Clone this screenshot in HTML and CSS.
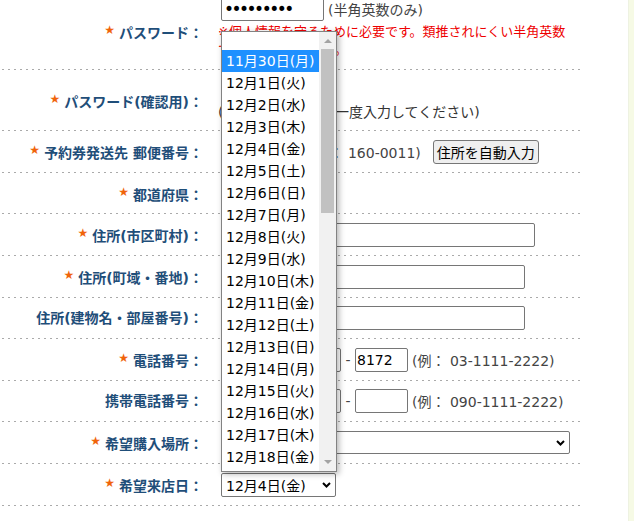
FILE: index.html
```html
<!DOCTYPE html>
<html lang="ja">
<head>
<meta charset="utf-8">
<title>予約フォーム</title>
<link rel="stylesheet" href="styles.css">
</head>
<body>
<div class="page">
  <div class="main">
    <div class="form">
      <div class="row">
        <div class="label"><span class="req">★</span>パスワード：</div>
        <div class="value v-pw">
          <div class="line"><input class="ctl lead pw" type="password" value="abcdefghi"><span class="hint">(半角英数のみ)</span></div>
          <div class="note">※個人情報を守るために必要です。類推されにくい半角英数<br>で入力してください。</div>
        </div>
      </div>
      <div class="row">
        <div class="label"><span class="req">★</span>パスワード(確認用)：</div>
        <div class="value v-confirm">
          <div class="line"><input class="ctl lead pw" type="password" value=""></div>
          <div class="text">(確認のため、もう一度入力してください)</div>
        </div>
      </div>
      <div class="row std">
        <div class="label"><span class="req">★</span>予約券発送先 郵便番号：</div>
        <div class="value">
          <div class="line"><input class="ctl lead zip" type="text" value=""><span class="hint">(例： 160-0011)</span><button class="btn" type="button">住所を自動入力</button></div>
        </div>
      </div>
      <div class="row std tight">
        <div class="label"><span class="req">★</span>都道府県：</div>
        <div class="value">
          <div class="line"><div class="ctl lead select pref"><span></span><svg class="chev" width="9" height="6" viewBox="0 0 9 6"><path d="M1 1 L4.5 4.5 L8 1" fill="none" stroke="#000" stroke-width="2"/></svg></div></div>
        </div>
      </div>
      <div class="row std">
        <div class="label"><span class="req">★</span>住所(市区町村)：</div>
        <div class="value"><div class="line"><input class="ctl lead addr1" type="text"></div></div>
      </div>
      <div class="row std">
        <div class="label"><span class="req">★</span>住所(町域・番地)：</div>
        <div class="value"><div class="line"><input class="ctl lead addr2" type="text"></div></div>
      </div>
      <div class="row std tight">
        <div class="label">住所(建物名・部屋番号)：</div>
        <div class="value"><div class="line"><input class="ctl lead addr2" type="text"></div></div>
      </div>
      <div class="row std">
        <div class="label"><span class="req">★</span>電話番号：</div>
        <div class="value"><div class="line"><input class="ctl lead tel" type="text"><span class="dash">-</span><input class="ctl tel" type="text"><span class="dash">-</span><input class="ctl tel" type="text" value="8172"><span class="hint">(例： 03-1111-2222)</span></div></div>
      </div>
      <div class="row std tight">
        <div class="label">携帯電話番号：</div>
        <div class="value"><div class="line"><input class="ctl lead tel" type="text"><span class="dash">-</span><input class="ctl tel" type="text"><span class="dash">-</span><input class="ctl tel" type="text"><span class="hint">(例： 090-1111-2222)</span></div></div>
      </div>
      <div class="row std">
        <div class="label"><span class="req">★</span>希望購入場所：</div>
        <div class="value"><div class="line"><div class="ctl lead select place"><span></span><svg class="chev" width="9" height="6" viewBox="0 0 9 6"><path d="M1 1 L4.5 4.5 L8 1" fill="none" stroke="#000" stroke-width="2"/></svg></div></div></div>
      </div>
      <div class="row std">
        <div class="label"><span class="req">★</span>希望来店日：</div>
        <div class="value"><div class="line"><div class="ctl lead select date"><span>12月4日(金)</span><svg class="chev" width="9" height="6" viewBox="0 0 9 6"><path d="M1 1 L4.5 4.5 L8 1" fill="none" stroke="#000" stroke-width="2"/></svg></div></div></div>
      </div>
    </div>
  </div>
  <div class="stripe"></div>

  <div class="popup">
    <div class="opts">
      <div class="opt blank"></div>
      <div class="opt sel">11月30日(月)</div>
      <div class="opt">12月1日(火)</div>
      <div class="opt">12月2日(水)</div>
      <div class="opt">12月3日(木)</div>
      <div class="opt">12月4日(金)</div>
      <div class="opt">12月5日(土)</div>
      <div class="opt">12月6日(日)</div>
      <div class="opt">12月7日(月)</div>
      <div class="opt">12月8日(火)</div>
      <div class="opt">12月9日(水)</div>
      <div class="opt">12月10日(木)</div>
      <div class="opt">12月11日(金)</div>
      <div class="opt">12月12日(土)</div>
      <div class="opt">12月13日(日)</div>
      <div class="opt">12月14日(月)</div>
      <div class="opt">12月15日(火)</div>
      <div class="opt">12月16日(水)</div>
      <div class="opt">12月17日(木)</div>
      <div class="opt">12月18日(金)</div>
    </div>
    <div class="sbar">
      <div class="sbtn"><svg width="8" height="5" viewBox="0 0 8 5"><path d="M0 5 L4 1 L8 5 Z" fill="#a3a3a3"/></svg></div>
      <div class="track"><div class="thumb"></div></div>
      <div class="sbtn"><svg width="8" height="5" viewBox="0 0 8 5"><path d="M0 0 L4 4 L8 0 Z" fill="#a3a3a3"/></svg></div>
    </div>
  </div>
</div>
</body>
</html>
```

FILE: styles.css
```css
* { box-sizing: border-box; }
html, body { margin: 0; padding: 0; background: #fff; }
body {
  font-family: "DejaVu Sans", "Noto Sans CJK JP", sans-serif;
  font-size: 14px;
  color: #333;
}
.page {
  position: relative;
  display: flex;
  width: 634px;
  height: 521px;
  overflow: hidden;
}
.main { flex: 1; }
.stripe {
  width: 6px;
  background: #f6fae5;
  border-left: 1px solid #eef2e2;
}
.form {
  width: 578px;
  margin: -7px 0 0 2px;
}
.row {
  display: grid;
  grid-template-columns: 201px 1fr;
  column-gap: 15px;
  align-items: center;
  padding-bottom: 1px;
  background: repeating-linear-gradient(to right, #aaa 0 2px, transparent 2px 6px) left bottom / 100% 1px no-repeat;
}
.row.std { height: 42px; }
.row.std.tight { height: 41px; }
.label {
  text-align: right;
  font-weight: bold;
  color: #1f4e79;
  white-space: nowrap;
  line-height: 20px;
}
.req {
  color: #f0640a;
  font-size: 12px;
  vertical-align: 4px;
  margin-right: 4px;
}
.value {
  display: flex;
  flex-direction: column;
  white-space: nowrap;
}
.v-pw { padding: 4px 0 10px; }
.v-confirm { padding: 9px 0 9px; }
.line {
  display: flex;
  align-items: center;
  height: 24px;
}
.note {
  margin-top: 2px;
  color: #e00;
  font-size: 13px;
  line-height: 18px;
}
.text { line-height: 18px; color: #333; }
.hint { margin-left: 4px; color: #444; }
.dash { width: 14px; text-align: center; color: #444; }
.ctl {
  height: 24px;
  margin: 0;
  padding: 0 1px;
  border: 1px solid #767676;
  border-radius: 2px;
  background: #fff;
  font: 14px "DejaVu Sans", "Noto Sans CJK JP", sans-serif;
  color: #000;
}
.lead { margin-left: 3px; }
.pw {
  width: 103px;
  padding-left: 2px;
  font-size: 17px;
  letter-spacing: -2.5px;
}
.zip { width: 85px; }
.tel { width: 53px; }
.addr1 { width: 314px; }
.addr2 { width: 304px; }
.btn {
  height: 24px;
  margin-left: 12px;
  padding: 0 3px;
  border: 1px solid #767676;
  border-radius: 3px;
  background: #efefef;
  font: 14px "DejaVu Sans", "Noto Sans CJK JP", sans-serif;
  color: #000;
}
.select {
  display: flex;
  align-items: center;
  justify-content: space-between;
  padding: 0 4px 0 4px;
}
.chev { flex: none; }
.pref { width: 100px; }
.place { width: 349px; height: 23px; }
.date { width: 115px; }

.popup {
  position: absolute;
  left: 221px;
  top: 31px;
  width: 116px;
  height: 441px;
  display: flex;
  border: 1px solid #828282;
  background: #fff;
  box-shadow: 2px 2px 6px rgba(0, 0, 0, 0.3);
  overflow: hidden;
}
.opts {
  flex: 1;
  overflow: hidden;
  color: #000;
}
.opt {
  height: 22px;
  line-height: 22px;
  padding-left: 4px;
  white-space: nowrap;
}
.opt.blank { height: 18px; }
.opt.sel { background: #1e90ff; color: #fff; }
.sbar {
  width: 17px;
  flex: none;
  display: flex;
  flex-direction: column;
  background: #f1f1f1;
}
.sbtn {
  height: 17px;
  display: flex;
  align-items: center;
  justify-content: center;
}
.track { flex: 1; }
.thumb {
  height: 164px;
  margin: 0 2px;
  background: #c1c1c1;
}
```
